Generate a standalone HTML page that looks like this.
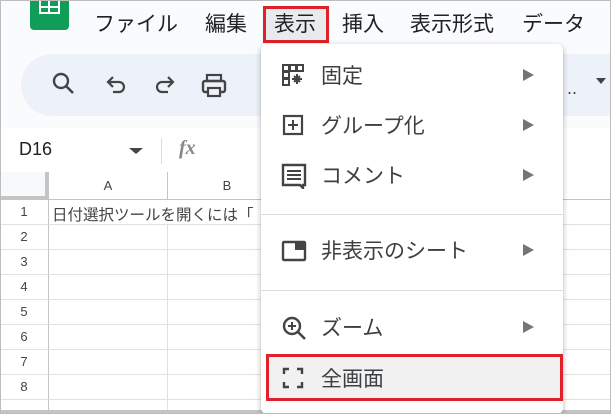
<!DOCTYPE html>
<html style="width:611px;height:414px;overflow:hidden"><head><meta charset="utf-8"><style>
*{margin:0;padding:0;box-sizing:border-box}
body{width:611px;height:414px;overflow:hidden;background:#f9fbfd;font-family:"Liberation Sans","Noto Sans CJK JP",sans-serif;position:relative;color:#202124}
.frame{position:absolute;left:0;top:0;width:611px;height:414px;border:1px solid #bdbdbd;pointer-events:none;z-index:50}
.abs{position:absolute}
.menu{position:absolute;top:10px;font-size:21px;color:#202124;line-height:30px}
.grid{position:absolute;left:0;top:172px;width:611px;height:242px;background:#fff;overflow:hidden}
.rh{position:absolute;left:0;width:49px;text-align:center;font-size:13px;color:#444;border-right:1px solid #c4c4c4;border-bottom:1px solid #e1e1e1;background:#fff;line-height:24px}
.pop{position:absolute;left:261px;top:44px;width:302px;height:370px;background:#fff;border-radius:6px;box-shadow:0 2px 6px rgba(0,0,0,.3);z-index:10}
.it{position:absolute;left:0;width:302px;height:40px;font-size:21px;color:#3c4043}
.it .t{position:absolute;left:60px;top:7px;line-height:30px}
.it .ar{position:absolute;left:262px;top:14px;width:0;height:0;border-left:11px solid #757575;border-top:6px solid transparent;border-bottom:6px solid transparent}
.it svg{position:absolute;left:20px;top:8px}
.div{position:absolute;left:0;width:302px;height:1px;background:#dadce0}
</style></head><body>
<div class="frame"></div>
<div class="abs" style="left:30px;top:0;width:39px;height:30px;background:#0f9d58;border-radius:0 0 4px 4px"></div>
<div class="abs" style="left:39px;top:0;width:21px;height:14px;border:2px solid #fff;border-top:none"></div>
<div class="abs" style="left:48px;top:0;width:2px;height:14px;background:#fff"></div>
<div class="abs" style="left:39px;top:6px;width:21px;height:2px;background:#fff"></div>
<div class="menu" style="left:94px">ファイル</div>
<div class="menu" style="left:205px">編集</div>
<div class="abs" style="left:263px;top:6px;width:66px;height:37px;border:3px solid #e0202a;background:#e8ebee"></div>
<div class="menu" style="left:274px">表示</div>
<div class="menu" style="left:342px">挿入</div>
<div class="menu" style="left:410px">表示形式</div>
<div class="menu" style="left:522px">データ</div>
<div class="abs" style="left:21px;top:54px;width:620px;height:62px;background:#edf2fa;border-radius:31px"></div>
<svg class="abs" style="left:50px;top:70px" width="28" height="28" viewBox="0 0 28 28"><circle cx="11" cy="11" r="7" fill="none" stroke="#444" stroke-width="2.4"/><path d="M16 16l7 7" stroke="#444" stroke-width="2.6"/></svg>
<svg class="abs" style="left:104px;top:74px" width="24" height="24" viewBox="0 0 24 24"><path d="M5 8h10a5 5 0 0 1 0 10H9" fill="none" stroke="#444" stroke-width="2.2"/><path d="M9 3L4 8l5 5" fill="none" stroke="#444" stroke-width="2.2"/></svg>
<svg class="abs" style="left:153px;top:74px" width="24" height="24" viewBox="0 0 24 24"><path d="M19 8H9a5 5 0 0 0 0 10h6" fill="none" stroke="#444" stroke-width="2.2"/><path d="M15 3l5 5-5 5" fill="none" stroke="#444" stroke-width="2.2"/></svg>
<svg class="abs" style="left:200px;top:72px" width="28" height="28" viewBox="0 0 28 28"><rect x="7" y="3" width="14" height="6" fill="none" stroke="#444" stroke-width="2.2"/><rect x="3" y="9" width="22" height="11" rx="2" fill="none" stroke="#444" stroke-width="2.4"/><rect x="8" y="16" width="12" height="8" fill="#edf2fa" stroke="#444" stroke-width="2.2"/></svg>
<div class="abs" style="left:567px;top:78px;font-size:18px;color:#444">..</div>
<div class="abs" style="left:596px;top:78px;width:0;height:0;border-top:6px solid #444;border-left:5px solid transparent;border-right:5px solid transparent"></div>
<div class="abs" style="left:0;top:128px;width:611px;height:44px;background:#fff"></div>
<div class="abs" style="left:19px;top:139px;font-size:18px;color:#202124">D16</div>
<div class="abs" style="left:129px;top:148px;width:0;height:0;border-top:6px solid #444;border-left:7px solid transparent;border-right:7px solid transparent"></div>
<div class="abs" style="left:161px;top:138px;width:1px;height:26px;background:#dadce0"></div>
<div class="abs" style="left:179px;top:137px;font-size:20px;font-style:italic;font-family:'Liberation Serif',serif;color:#888;font-weight:bold">fx</div>
<div class="grid">
 <div class="abs" style="left:0;top:0;width:49px;height:28px;background:#f8f9fa;border-right:4px solid #c4c4c4;border-bottom:4px solid #c4c4c4"></div>
 <div class="abs" style="left:49px;top:0;width:562px;height:28px;background:#fff;border-bottom:1px solid #c4c4c4"></div>
 <div class="abs" style="left:49px;top:0;width:119px;height:28px;border-right:1px solid #c4c4c4;text-align:center;font-size:13px;line-height:28px;color:#444">A</div>
 <div class="abs" style="left:168px;top:0;width:119px;height:28px;border-right:1px solid #c4c4c4;text-align:center;font-size:13px;line-height:28px;color:#444">B</div>
 <div class="rh" style="top:28px;height:25px">1</div>
 <div class="rh" style="top:53px;height:25px">2</div>
 <div class="rh" style="top:78px;height:25px">3</div>
 <div class="rh" style="top:103px;height:25px">4</div>
 <div class="rh" style="top:128px;height:25px">5</div>
 <div class="rh" style="top:153px;height:25px">6</div>
 <div class="rh" style="top:178px;height:25px">7</div>
 <div class="rh" style="top:203px;height:25px">8</div>
 <div class="rh" style="top:228px;height:25px;line-height:40px">9</div>
 <div class="abs" style="left:49px;top:28px;width:562px;height:210px;background:repeating-linear-gradient(to bottom,transparent 0,transparent 24px,#e1e1e1 24px,#e1e1e1 25px)"></div>
 <div class="abs" style="left:167px;top:53px;width:1px;height:185px;background:#e1e1e1"></div>
 <div class="abs" style="left:52px;top:31px;font-size:15.5px;color:#444;white-space:nowrap">日付選択ツールを開くには「</div>
 <div class="abs" style="left:0;top:238px;width:611px;height:4px;background:#c4c4c4"></div>
</div>
<div class="pop">
 <div class="it" style="top:11px"><svg width="24" height="24" viewBox="0 0 24 24"><g fill="none" stroke="#444" stroke-width="2"><rect x="2" y="2" width="6" height="6"/><rect x="9" y="2" width="6" height="6"/><rect x="16" y="2" width="6" height="6"/><rect x="2" y="9" width="6" height="6"/><rect x="2" y="16" width="6" height="6"/></g><path d="M13 13l6 6M19 13l-6 6M16 11v10M11 16h10" stroke="#444" stroke-width="2"/></svg><span class="t">固定</span><span class="ar"></span></div>
 <div class="it" style="top:61px"><svg width="24" height="24" viewBox="0 0 24 24"><rect x="3" y="3" width="18" height="18" fill="none" stroke="#444" stroke-width="2.2"/><path d="M12 7v10M7 12h10" stroke="#444" stroke-width="2"/></svg><span class="t">グループ化</span><span class="ar"></span></div>
 <div class="it" style="top:111px"><svg width="26" height="26" viewBox="0 0 26 26"><path d="M2 2h22v20h-2v3l-3-3H2z" fill="none" stroke="#444" stroke-width="2.4"/><path d="M6 8h14M6 12h14M6 16h14" stroke="#444" stroke-width="2"/></svg><span class="t">コメント</span><span class="ar"></span></div>
 <div class="div" style="top:170px"></div>
 <div class="it" style="top:186px"><svg width="26" height="26" viewBox="0 0 26 26"><rect x="2" y="4" width="22" height="18" rx="1" fill="none" stroke="#444" stroke-width="2.4"/><rect x="14" y="4" width="10" height="8" fill="#444"/></svg><span class="t">非表示のシート</span><span class="ar"></span></div>
 <div class="div" style="top:246px"></div>
 <div class="it" style="top:263px"><svg width="26" height="26" viewBox="0 0 26 26"><circle cx="11" cy="11" r="8" fill="none" stroke="#444" stroke-width="2.4"/><path d="M17 17l7 7" stroke="#444" stroke-width="2.6"/><path d="M11 7v8M7 11h8" stroke="#444" stroke-width="2"/></svg><span class="t">ズーム</span><span class="ar"></span></div>
 <div class="abs" style="left:5px;top:310px;width:297px;height:47px;border:3px solid #e0202a;background:#f1f1f1"></div>
 <div class="it" style="top:314px"><svg width="24" height="24" viewBox="0 0 24 24"><path d="M3 8V3h5M16 3h5v5M21 16v5h-5M8 21H3v-5" fill="none" stroke="#444" stroke-width="2.4"/></svg><span class="t">全画面</span></div>
</div>
</body></html>
